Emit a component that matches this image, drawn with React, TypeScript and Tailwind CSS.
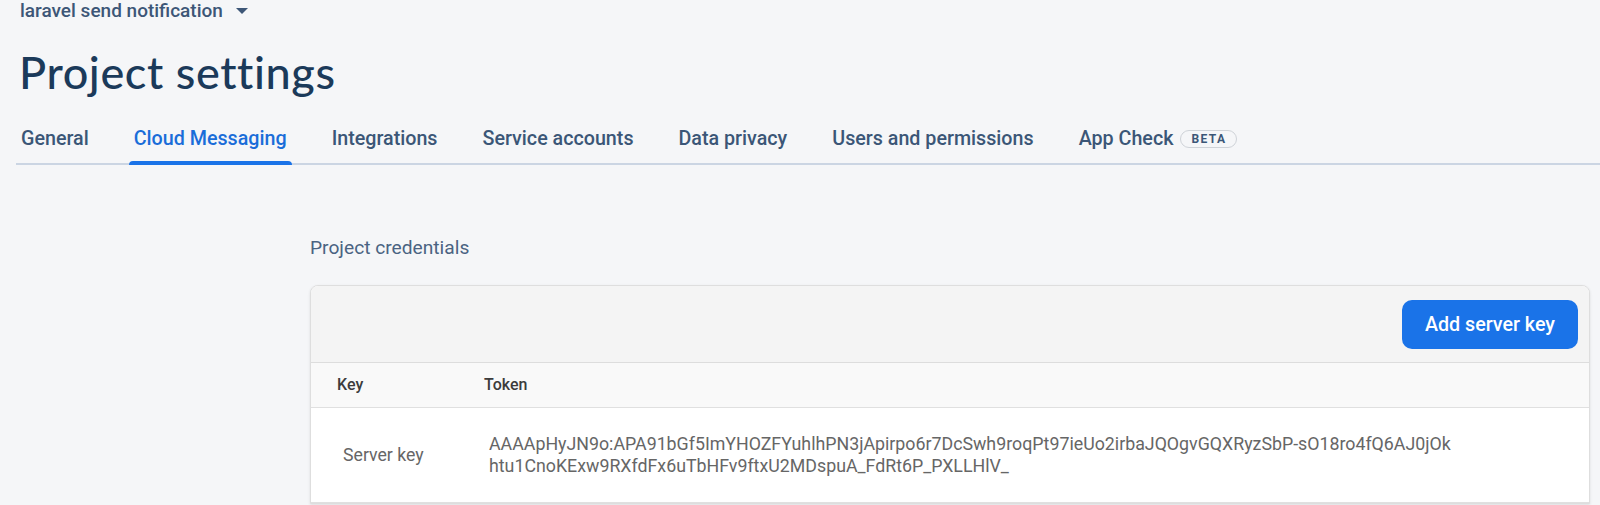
const tabs = [
  "General",
  "Cloud Messaging",
  "Integrations",
  "Service accounts",
  "Data privacy",
  "Users and permissions",
  "App Check",
];

const TOKEN_LINE_1 =
  "AAAApHyJN9o:APA91bGf5ImYHOZFYuhlhPN3jApirpo6r7DcSwh9roqPt97ieUo2irbaJQOgvGQXRyzSbP-sO18ro4fQ6AJ0jOk";
const TOKEN_LINE_2 = "htu1CnoKExw9RXfdFx6uTbHFv9ftxU2MDspuA_FdRt6P_PXLLHlV_";

const App = () => {
  const active = "Cloud Messaging";

  return (
    <div className="min-h-screen bg-[#f5f6f8] font-['Roboto',sans-serif] overflow-hidden">
      {/* Project picker */}
      <div className="flex items-center h-[21px] pl-[20px]">
        <span className="text-[19px] leading-[21px] font-medium text-[#3d5677]">
          laravel send notification
        </span>
        <svg width="12" height="6" viewBox="0 0 12 6" className="ml-[13px]">
          <path d="M0 0h12L6 6z" fill="#3d5677" />
        </svg>
      </div>

      {/* Title */}
      <h1 className="mt-[25px] pl-[19px] text-[45px] leading-[52px] tracking-[0.6px] font-medium text-[#1b3a5a] font-['Lato',sans-serif]">
        Project settings
      </h1>

      {/* Tabs */}
      <div className="ml-[16px] flex gap-[35px] border-b-2 border-[#cbd5e3]">
        {tabs.map((tab) => (
          <div
            key={tab}
            className="relative -mb-[2px] h-[67px] px-[5px] pt-[29px] flex items-start"
          >
            <span
              className={
                tab === active
                  ? "text-[19.7px] leading-[24px] font-medium text-[#1a6dd9]"
                  : "text-[19.7px] leading-[24px] font-medium text-[#3b5677]"
              }
            >
              {tab}
            </span>
            {tab === "App Check" && (
              <span className="ml-[7px] mt-[3px] h-[18px] px-[10px] rounded-full border border-[#cfd3d8] text-[12px] leading-[16px] font-bold tracking-[1.4px] text-[#3b5677]">
                BETA
              </span>
            )}
            {tab === active && (
              <span className="absolute left-0 right-0 bottom-0 h-[4px] rounded-t-[4px] bg-[#1a73e8]" />
            )}
          </div>
        ))}
      </div>

      {/* Cloud messaging content */}
      <div className="pl-[310px] pr-[10px]">
        <div className="mt-[71px] text-[19.2px] leading-[24px] text-[#4a6382]">
          Project credentials
        </div>

        <div className="mt-[25px] rounded-t-[8px] border border-[#dedede] bg-white shadow-[0_1px_3px_rgba(0,0,0,0.1)] overflow-hidden">
          {/* Card header */}
          <div className="flex justify-end bg-[#f4f4f4] pt-[14px] pb-[13px] pr-[11px] border-b border-[#dddddd]">
            <button className="h-[49px] px-[23px] rounded-[10px] bg-[#1a73e8] text-white text-[19.7px] font-medium">
              Add server key
            </button>
          </div>

          {/* Table head */}
          <div className="flex items-center h-[45px] bg-[#f9f9f9] border-b border-[#e0e0e0] pl-[26px] text-[16px] font-medium text-[#3c3c3c]">
            <div className="w-[147px]">Key</div>
            <div>Token</div>
          </div>

          {/* Table row */}
          <div className="flex items-center h-[95px] border-b border-[#e0e0e0] pl-[32px] text-[#666666]">
            <div className="w-[146px] text-[17.7px]">Server key</div>
            <div className="text-[17.8px] leading-[22px]">
              <div>{TOKEN_LINE_1}</div>
              <div>{TOKEN_LINE_2}</div>
            </div>
          </div>
        </div>
      </div>
    </div>
  );
};

export default App;
